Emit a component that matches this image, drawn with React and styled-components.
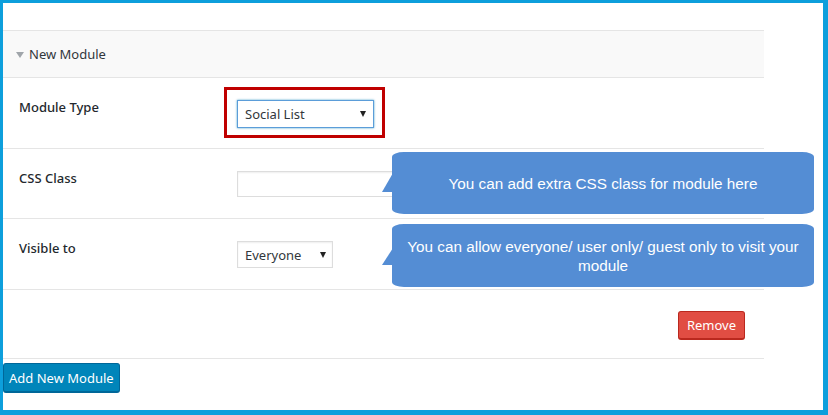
import React from 'react'
import styled, { createGlobalStyle } from 'styled-components';

const Global = createGlobalStyle`
    html, body {
        margin: 0;
        padding: 0;
        background: #fff;
    }
    body {
        font-family: "Noto Sans", "Open Sans", sans-serif;
        color: #23282d;
    }
`;

const Frame = styled.div`
    width: 828px;
    height: 415px;
    box-sizing: border-box;
    border-style: solid;
    border-color: #0d9fdc;
    border-width: 3px 5px 5px 3px;
    padding-top: 27px;
    overflow: hidden;
`;

const Panel = styled.section`
    width: 761px;
`;

const Header = styled.div`
    height: 46px;
    display: flex;
    align-items: center;
    gap: 5px;
    padding-left: 13px;
    background: #f9f9f9;
    border-top: 1px solid #e5e5e5;
    border-bottom: 1px solid #e5e5e5;
    font-size: 13px;
    color: #32373c;

    .caret{
        width: 0;
        height: 0;
        border-left: 4px solid transparent;
        border-right: 4px solid transparent;
        border-top: 6px solid #a0a5aa;
        margin-top: 1px;
    }
`;

const Row = styled.div`
    position: relative;
    display: grid;
    grid-template-columns: 218px 1fr;
    align-items: start;
    height: ${p => p.$h}px;
    box-sizing: border-box;
    padding: 22px 0 0 16px;
    border-bottom: 1px solid #e5e5e5;
`;

const Label = styled.div`
    font-size: 13px;
    font-weight: 500;
    line-height: 14px;
    color: #23282d;
`;

const Control = styled.div`
    position: relative;
    width: ${p => p.$w}px;
    height: ${p => p.$h}px;
    box-sizing: border-box;
    border: 1px solid ${p => p.$focus ? '#5b9dd9' : '#ddd'};
    box-shadow: ${p => p.$focus ? '0 0 2px rgba(30,140,190,.8)' : 'inset 0 1px 2px rgba(0,0,0,.07)'};
    background: #fff;
    display: flex;
    align-items: center;
    padding-left: 7px;
    font-size: 13px;
    color: #32373c;
`;

const Arrow = styled.span`
    position: absolute;
    right: ${p => p.$r}px;
    top: 50%;
    margin-top: -3px;
    width: 0;
    height: 0;
    border-left: 3.5px solid transparent;
    border-right: 3.5px solid transparent;
    border-top: 6px solid #222;
`;

const Highlight = styled.div`
    position: absolute;
    left: -14px;
    top: -14px;
    width: 161px;
    height: 51px;
    box-sizing: border-box;
    border: 3px solid #c00000;
    pointer-events: none;
`;

const Callout = styled.div`
    position: absolute;
    left: 389px;
    top: ${p => p.$top}px;
    width: 422px;
    height: ${p => p.$h}px;
    box-sizing: border-box;
    padding: 0 14px;
    background: #548dd4;
    border-radius: 12px / 5px;
    display: flex;
    align-items: center;
    justify-content: center;
    text-align: center;
    font-family: "Liberation Sans", Arial, sans-serif;
    font-size: 15.3px;
    line-height: 19px;
    color: #fff;

    &::before{
        content: '';
        position: absolute;
        left: -10px;
        top: ${p => p.$tipTop}px;
        width: 11px;
        height: ${p => p.$tipH}px;
        background: #548dd4;
        clip-path: polygon(100% 0, 0 100%, 100% 100%);
    }
`;

const Footer = styled.div`
    display: flex;
    justify-content: flex-end;
    height: 69px;
    box-sizing: border-box;
    padding: 21px 19px 0 0;
    border-bottom: 1px solid #e5e5e5;
`;

const Button = styled.button`
    height: ${p => p.$h}px;
    padding: 0 ${p => p.$px}px;
    font-family: "Noto Sans", "Open Sans", sans-serif;
    font-size: 13px;
    color: #fff;
    background: ${p => p.$bg};
    border: 1px solid ${p => p.$bd};
    border-bottom-width: 2px;
    border-radius: 3px;
    cursor: pointer;
`;

const Actions = styled.div`
    padding-top: 4px;
`;

const App = () => {
  return (
    <Frame>
        <Global />
        <Panel>
            <Header><span className='caret' />New Module</Header>
            <Row $h={71}>
                <Label>Module Type</Label>
                <Control $w={137} $h={28} $focus>
                    Social List
                    <Arrow $r={7} />
                    <Highlight />
                </Control>
            </Row>
            <Row $h={70}>
                <Label>CSS Class</Label>
                <Control $w={200} $h={26} />
                <Callout $top={3} $h={62} $tipTop={21} $tipH={19}>
                    You can add extra CSS class for module here
                </Callout>
            </Row>
            <Row $h={71}>
                <Label>Visible to</Label>
                <Control $w={96} $h={27}>
                    Everyone
                    <Arrow $r={6} />
                </Control>
                <Callout $top={5} $h={63} $tipTop={24} $tipH={17}>
                    You can allow everyone/ user only/ guest only to visit your module
                </Callout>
            </Row>
            <Footer>
                <Button type='button' $h={29} $px={8} $bg='#e14d43' $bd='#ba281e'>Remove</Button>
            </Footer>
        </Panel>
        <Actions>
            <Button type='button' $h={30} $px={5} $bg='#0085ba' $bd='#006799'>Add New Module</Button>
        </Actions>
    </Frame>
  )
}

export default App;
